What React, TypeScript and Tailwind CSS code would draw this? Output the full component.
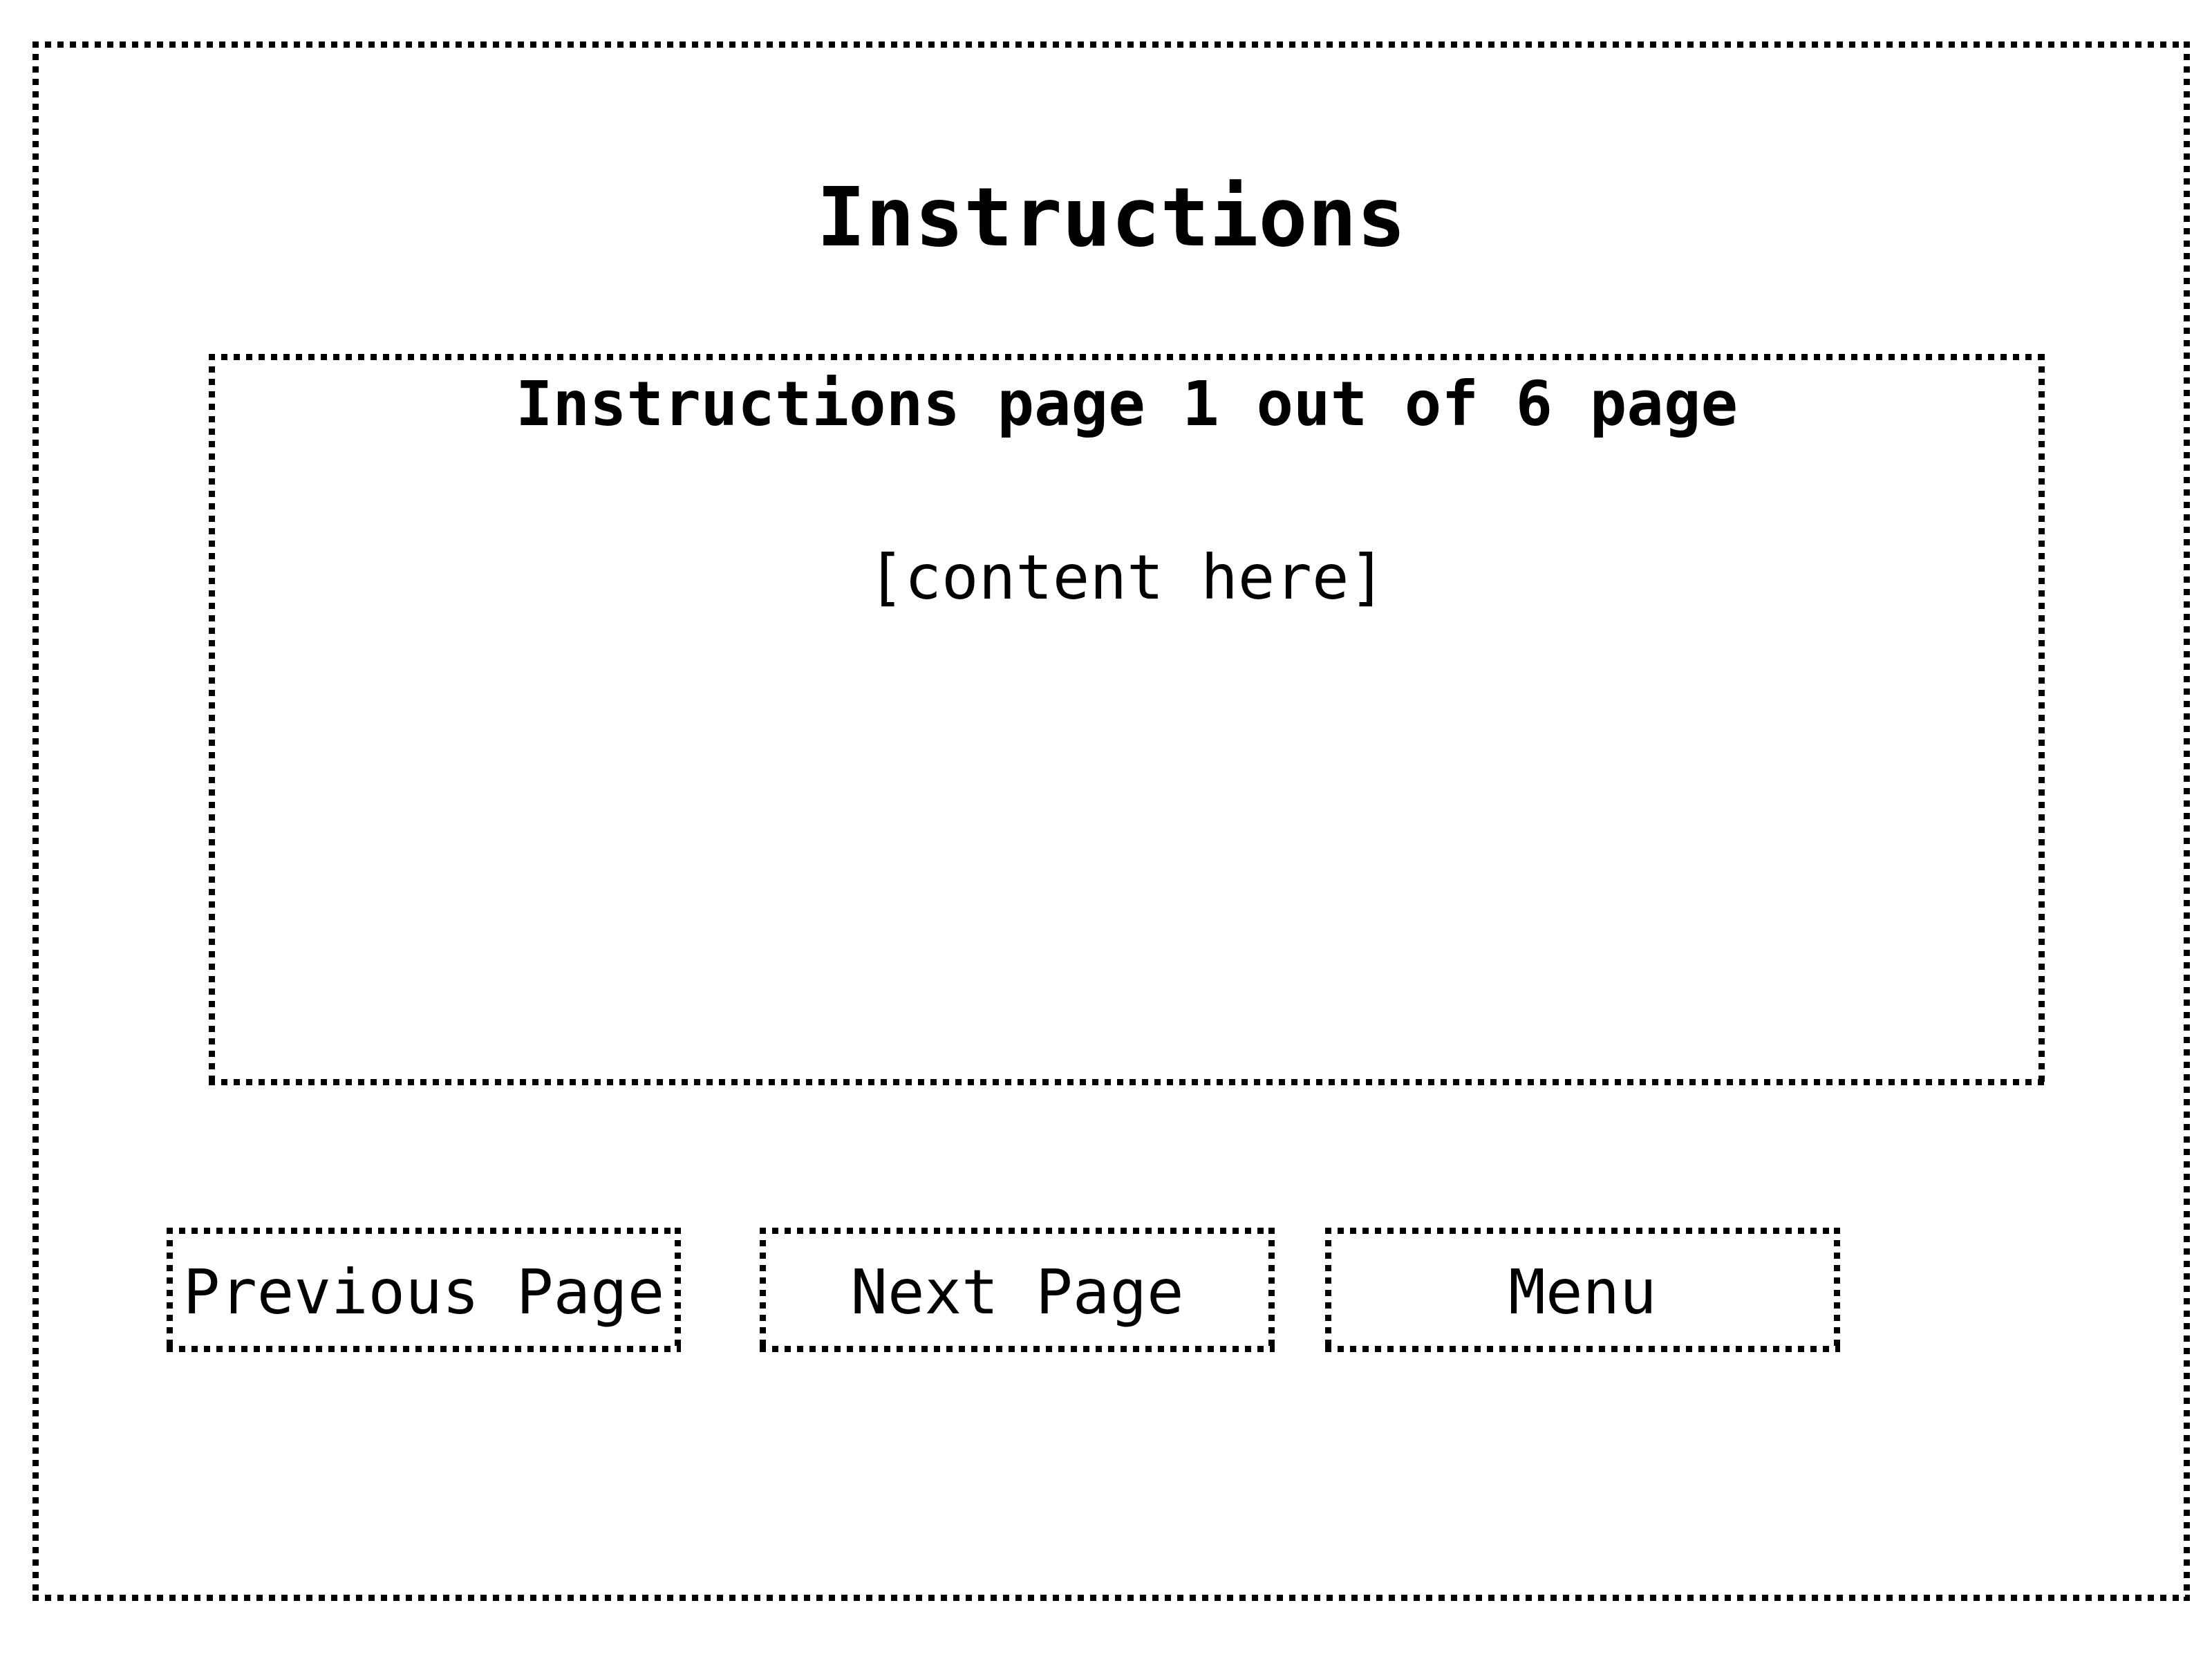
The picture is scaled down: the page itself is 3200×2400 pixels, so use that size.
// square-dot frame, 9px dots on an 18px rhythm
const dotted =
  "p-[9px] bg-[linear-gradient(90deg,#000_50%,transparent_0),linear-gradient(90deg,#000_50%,transparent_0),linear-gradient(#000_50%,transparent_0),linear-gradient(#000_50%,transparent_0)] bg-[length:18px_9px,18px_9px,9px_18px,9px_18px] bg-[position:0_0,0_100%,0_0,100%_0] [background-repeat:repeat-x,repeat-x,repeat-y,repeat-y]";

function NavButton({ label, className }: { label: string; className: string }) {
  return (
    <button
      className={`${dotted} h-[180px] pt-[49px] pb-[42px] text-center text-[89px] leading-none ${className}`}
    >
      {label}
    </button>
  );
}

export default function App() {
  return (
    <div className="min-h-screen bg-white font-['DejaVu_Sans_Mono','Liberation_Mono',monospace] text-black">
      {/* outer frame */}
      <div className={`${dotted} ml-[47px] mt-[60px] flex h-[2256px] w-[3121px] flex-col`}>
        <h1 className="pt-[186px] text-center text-[118px] font-bold leading-none">
          Instructions
        </h1>

        {/* instructions panel */}
        <div className={`${dotted} ml-[246px] mt-[139px] flex h-[1058px] w-[2656px] flex-col items-center`}>
          <h2 className="pt-[19px] text-[89px] font-bold leading-none">
            Instructions page 1 out of 6 page
          </h2>
          <p className="mt-[162px] text-[89px] leading-none">[content here]</p>
        </div>

        {/* navigation buttons */}
        <div className="ml-[185px] mt-[206px] flex">
          <NavButton label="Previous Page" className="w-[744px]" />
          <NavButton label="Next Page" className="ml-[114px] w-[745px]" />
          <NavButton label="Menu" className="ml-[73px] w-[745px]" />
        </div>
      </div>
    </div>
  );
}
